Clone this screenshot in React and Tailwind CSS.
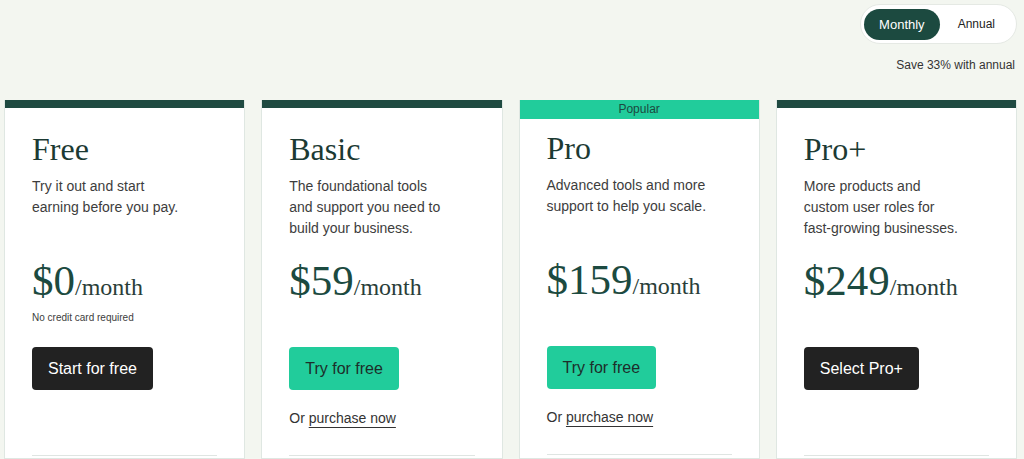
import React from "react";

const sans = { fontFamily: '"Liberation Sans", Arial, sans-serif' };
const serif = { fontFamily: '"Liberation Serif", "Times New Roman", serif' };

const plans = [
  {
    name: "Free",
    desc: "Try it out and start earning before you pay.",
    price: "$0",
    note: "No credit card required",
    cta: "Start for free",
    dark: true,
  },
  {
    name: "Basic",
    desc: "The foundational tools and support you need to build your business.",
    price: "$59",
    cta: "Try for free",
    purchase: true,
  },
  {
    name: "Pro",
    desc: "Advanced tools and more support to help you scale.",
    price: "$159",
    cta: "Try for free",
    purchase: true,
    popular: true,
  },
  {
    name: "Pro+",
    desc: "More products and custom user roles for fast-growing businesses.",
    price: "$249",
    cta: "Select Pro+",
    dark: true,
  },
];

function Card({ p }) {
  return (
    <div className="flex flex-col bg-white border border-[#dfe7e2] border-t-0 h-[359px]">
      {p.popular ? (
        <div className="h-[19px] bg-[#21cc9b] text-[#1c4a40] text-[12px] leading-[19px] text-center">
          Popular
        </div>
      ) : (
        <div className="h-[8px] bg-[#1f4a41]" />
      )}
      <div className={p.popular ? "px-[27px] pt-[9px]" : "px-[27px] pt-[21px]"}>
        <h2 className="text-[32px] leading-[40px] text-[#1c3a33] font-normal" style={serif}>
          {p.name}
        </h2>
        <p className="mt-[7px] h-[63px] w-[161px] text-[14px] leading-[21px] text-[#3d3d3d]">
          {p.desc}
        </p>
        <div className="mt-[17px] h-[91px]">
          <div className="h-[50px] leading-[50px] text-[#1c4a40]" style={serif}>
            <span className="text-[43px]">{p.price}</span>
            <span className="text-[24px] text-[#2a3e39]">/month</span>
          </div>
          {p.note && (
            <div className="mt-[6px] text-[10px] leading-[12px] text-[#3d3d3d]">
              {p.note}
            </div>
          )}
        </div>
        <div className="flex">
          <button
            className={
              p.dark
                ? "h-[43px] px-4 rounded bg-[#222222] text-white text-[16px]"
                : "h-[43px] px-4 rounded bg-[#21cc9b] text-[#1d2e2a] text-[16px]"
            }
          >
            {p.cta}
          </button>
        </div>
        <div className="h-[65px] pt-[18px]">
          {p.purchase && (
            <div className="text-[14px] leading-[20px] text-[#333]">
              Or{" "}
              <span className="underline underline-offset-[4px] decoration-[#333]">
                purchase now
              </span>
            </div>
          )}
        </div>
        <div className="border-t border-[#dfe5e2]" />
      </div>
    </div>
  );
}

export default function App() {
  return (
    <div className="w-[1024px] h-[459px] overflow-hidden bg-[#f3f6f0]" style={sans}>
      <div className="flex flex-col items-end pr-[7px] pt-[4px]">
        <div className="flex items-center h-[40px] p-[3px] rounded-full bg-white border border-[#e5e9e4]">
          <div className="h-[31px] px-[15px] rounded-full bg-[#1c4a40] text-white text-[13px] leading-[31px]">
            Monthly
          </div>
          <div className="h-[31px] px-[18px] text-[#222] text-[12px] leading-[31px]">
            Annual
          </div>
        </div>
        <div className="mt-[14px] text-[12px] leading-[14px] text-[#333] pr-[2px]">
          Save 33% with annual
        </div>
      </div>
      <div className="grid grid-cols-4 gap-4 pl-[4px] pr-[7px] mt-[28px]">
        {plans.map((p) => (
          <Card key={p.name} p={p} />
        ))}
      </div>
    </div>
  );
}
